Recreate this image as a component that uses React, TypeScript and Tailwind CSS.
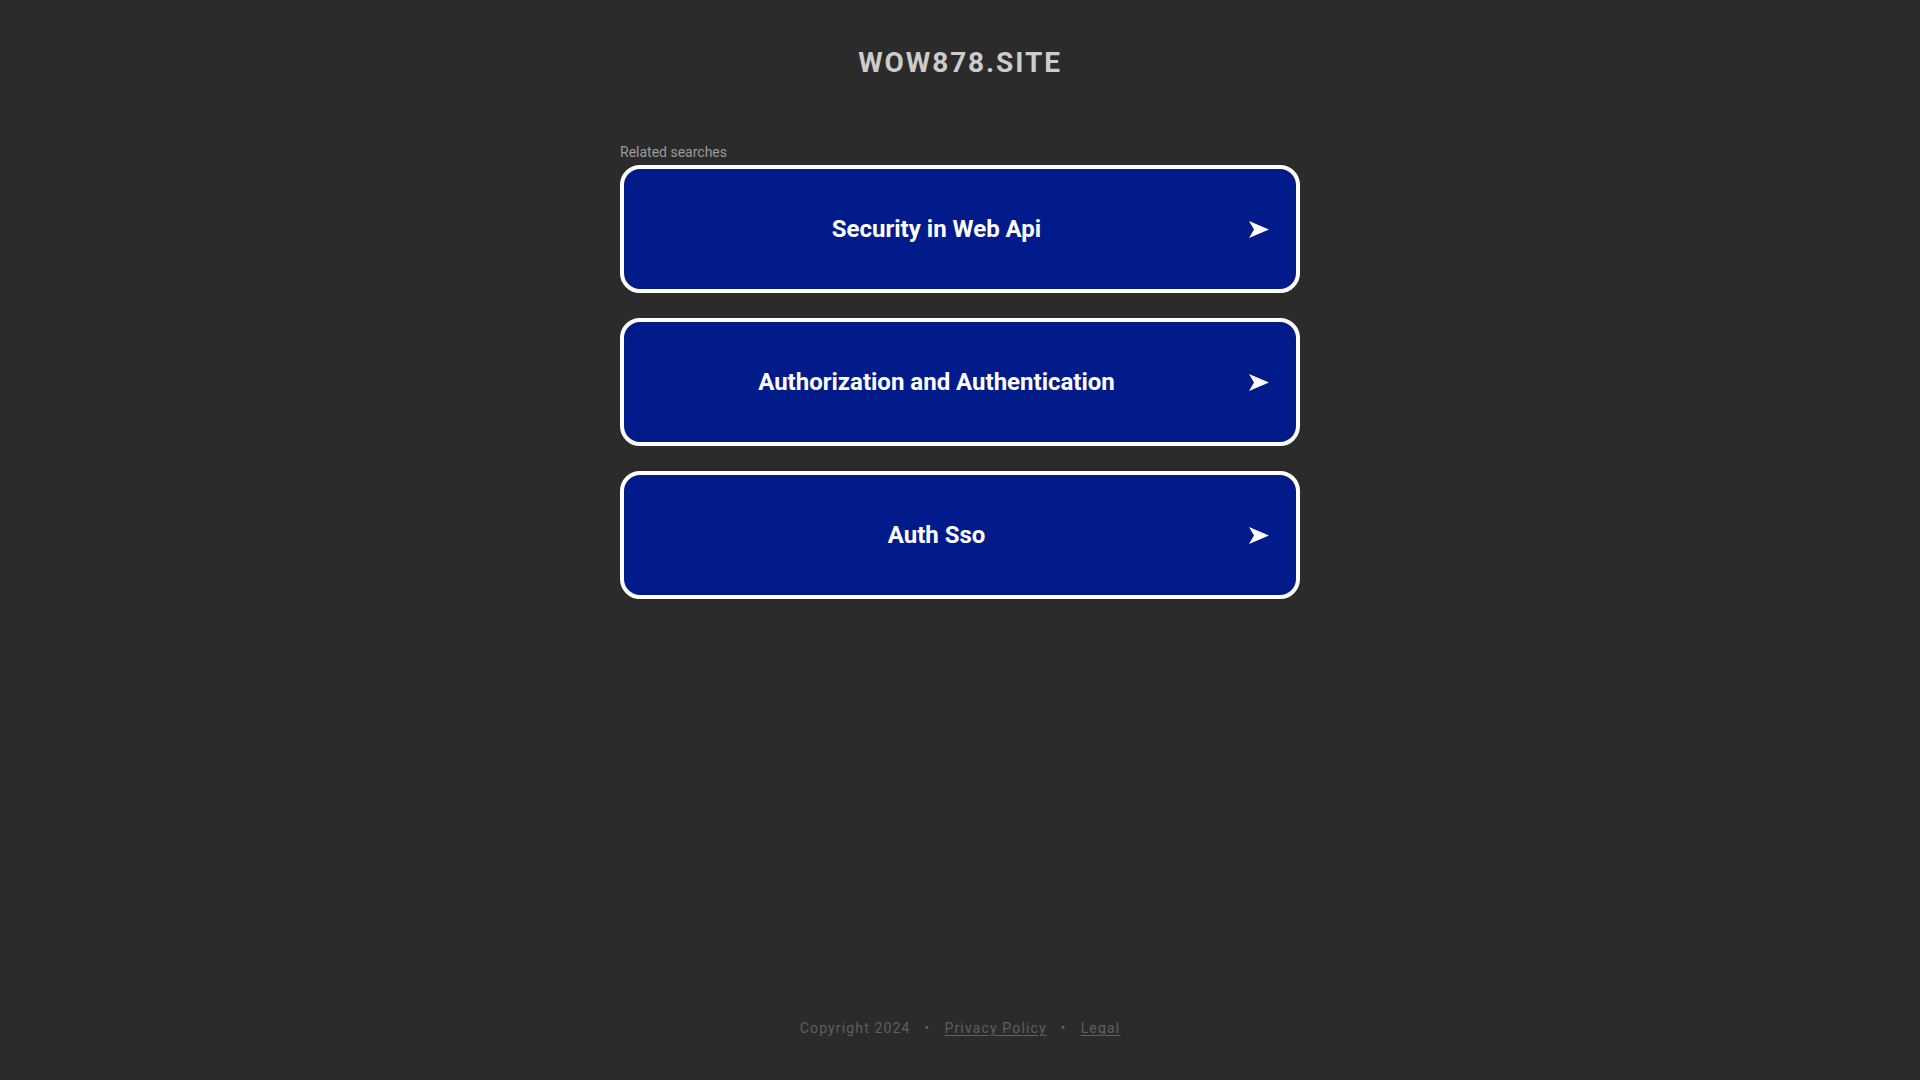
const searches = ['Security in Web Api', 'Authorization and Authentication', 'Auth Sso'];

function Arrow() {
    return (
        <svg width="20" height="17" viewBox="0 0 20 17" className="shrink-0" aria-hidden="true">
            <path d="M0 0 L20 8.5 L0 17 L5 8.5 Z" fill="#ffffff" />
        </svg>
    );
}

export default function App() {
    return (
        <div
            className="min-h-screen w-full bg-[#2b2b2b] flex flex-col items-center"
            style={{ fontFamily: 'Roboto, "Liberation Sans", sans-serif' }}
        >
            <h1 className="pt-[49px] text-[28px] leading-none font-bold tracking-[1.9px] text-[#cccccc]">WOW878.SITE</h1>

            <div className="mt-[68px] w-[680px]">
                <p className="text-[14px] leading-none text-[#9b9b9b]">Related searches</p>
                <div className="mt-[6px] flex flex-col gap-[25px]">
                    {searches.map((s) => (
                        <a
                            key={s}
                            href="#"
                            className="h-[128px] rounded-[20px] border-4 border-white bg-[#011b8a] flex items-center pr-[27px]"
                        >
                            <span className="flex-1 text-center text-[24px] font-bold text-white">{s}</span>
                            <Arrow />
                        </a>
                    ))}
                </div>
            </div>

            <footer className="mt-auto pb-[45px] text-[14px] leading-none tracking-[1.15px] text-[#5f5f5f] flex items-center gap-[14px]">
                <span>Copyright 2024</span>
                <span>•</span>
                <a href="#" className="underline underline-offset-2">Privacy Policy</a>
                <span>•</span>
                <a href="#" className="underline underline-offset-2">Legal</a>
            </footer>
        </div>
    );
}
